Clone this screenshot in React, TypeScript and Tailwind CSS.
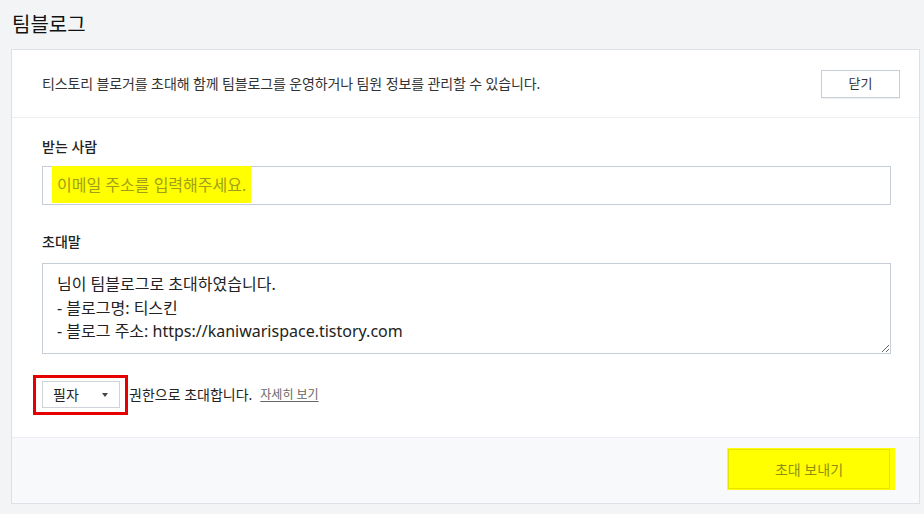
import React from 'react';

const font = { fontFamily: '"Noto Sans", "Noto Sans CJK KR", sans-serif' };

const inviteText = `님이 팀블로그로 초대하였습니다.
- 블로그명: 티스킨
- 블로그 주소: https://kaniwarispace.tistory.com`;

const App = () => {
  return (
    <div style={font} className="w-[924px] h-[514px] bg-[#f3f4f6] overflow-hidden text-[#222]">
      {/* Title */}
      <h1 className="pl-[12px] pt-[11px] h-[49px] text-[20px] leading-[28px] text-[#111]">팀블로그</h1>

      {/* Card */}
      <div className="ml-[11px] w-[909px] border border-[#dde0e6] bg-white">
        {/* Header */}
        <div className="h-[68px] flex items-center justify-between pl-[30px] pr-[19px] border-b border-[#eceef1]">
          <p className="text-[14px] text-[#333] tracking-[-0.12px]">
            티스토리 블로거를 초대해 함께 팀블로그를 운영하거나 팀원 정보를 관리할 수 있습니다.
          </p>
          <button className="w-[79px] h-[28px] border border-[#c8ced6] bg-white text-[13px] text-[#333] shadow-[0_1px_1px_rgba(0,0,0,0.05)]">
            닫기
          </button>
        </div>

        {/* Body */}
        <div className="pl-[30px] pr-[28px] pt-[19px] pb-[29px] border-b border-[#eceef1]">
          <label className="block text-[14px] leading-[20px] font-medium text-[#222] mb-[9px]">받는 사람</label>
          <div className="h-[39px] border border-[#c6cdd7] flex items-stretch pl-[9px]">
            <span className="bg-[#ffff00] px-[5px] -mt-px mb-[1px] flex items-center text-[16px] text-[#a0a018]">
              이메일 주소를 입력해주세요.
            </span>
          </div>

          <label className="block mt-[27px] text-[14px] leading-[20px] font-medium text-[#222] mb-[11px]">초대말</label>
          <textarea
            defaultValue={inviteText}
            style={font}
            className="block w-full h-[91px] border border-[#c6cdd7] px-[14px] pt-[9px] text-[16px] leading-[23.5px] text-[#222] outline-none resize"
          />

          {/* Permission row */}
          <div className="mt-[27px] flex items-center h-[27px]">
            <div className="relative">
              <button className="w-[78px] h-[27px] border border-[#cfd4db] bg-white flex items-center justify-between pl-[10px] pr-[11px] text-[14px] text-[#222]">
                필자
                <span className="w-0 h-0 border-l-[3px] border-r-[3px] border-t-[4px] border-l-transparent border-r-transparent border-t-[#444]" />
              </button>
              <div className="absolute left-[-9px] top-[-6px] w-[95px] h-[40px] border-[3px] border-[#e60000] pointer-events-none" />
            </div>
            <span className="ml-[9px] text-[14px] text-[#222]">권한으로 초대합니다.</span>
            <a className="ml-[8px] text-[12px] text-[#666] underline underline-offset-2">자세히 보기</a>
          </div>
        </div>

        {/* Footer */}
        <div className="h-[65px] bg-[#f8f9fb] flex justify-end items-start pt-[10px] pr-[24px]">
          <div className="bg-[#ffff00] w-[168px] h-[42px] pl-[1px] pt-[1px]">
            <button className="w-[162px] h-[40px] border border-[#e4e400] text-[14px] text-[#8f8f10]">
              초대 보내기
            </button>
          </div>
        </div>
      </div>
    </div>
  );
};

export default App;
